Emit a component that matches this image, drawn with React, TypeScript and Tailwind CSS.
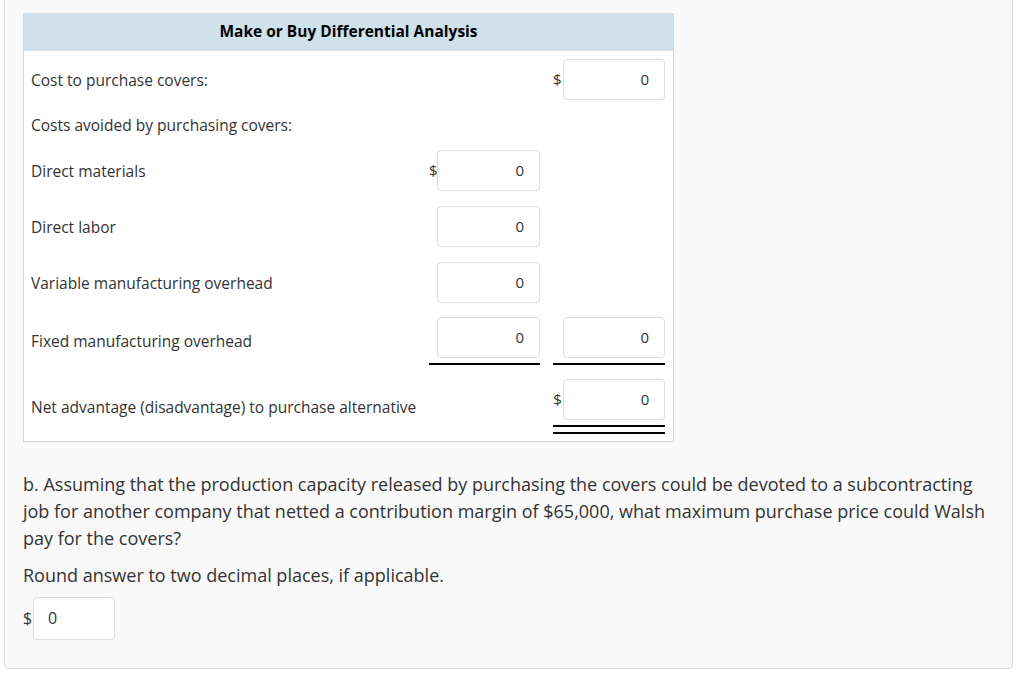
import React from "react";

const font = { fontFamily: '"Open Sans", "Noto Sans", sans-serif' };

function Box({ dollar, dw, w }: { dollar?: boolean; dw: string; w: string }) {
  return (
    <div className="flex items-center">
      <span className={`${dw} text-[15px] leading-none text-[#333] ${dollar ? "" : "invisible"}`}>$</span>
      <div
        className={`${w} h-[41px] rounded-[4px] border border-[#dcdcdc] bg-white flex items-center justify-end pr-[15px] text-[15px] text-[#333]`}
      >
        0
      </div>
    </div>
  );
}

export default function App() {
  const row = "grid grid-cols-[1fr_111px_112px] gap-x-[13px] pl-[7px] pr-2 items-center";
  const label = "text-[15.5px] leading-[20px] text-[#333] whitespace-nowrap";
  return (
    <div className="min-h-[674px] bg-white" style={font}>
      <div className="ml-[4px] w-[1009px] h-[669px] bg-[#f9f9f9] border-l border-r border-b border-[#d9d9d9] rounded-b-[5px] pl-[18px] pr-[18px] pt-[13px]">
        <div className="w-[651px] bg-white border border-[#d4d4d4] border-t-0">
          <div className="h-[38px] bg-[#cfe1eb] flex items-center justify-center text-[15.5px] font-bold text-black">
            Make or Buy Differential Analysis
          </div>
          {/* Row 1 */}
          <div className={`${row} pt-[8px] pb-[8px]`}>
            <div className={label}>Cost to purchase covers:</div>
            <div />
            <Box dollar dw="w-[10px]" w="w-[102px]" />
          </div>
          {/* Row 2 */}
          <div className={`${row} pt-[7px] pb-[7px]`}>
            <div className={label}>Costs avoided by purchasing covers:</div>
          </div>
          {/* Row 3 */}
          <div className={`${row} pt-[8px] pb-[7px]`}>
            <div className={label}>Direct materials</div>
            <Box dollar dw="w-[8px]" w="w-[103px]" />
            <div />
          </div>
          <div className={`${row} pt-[8px] pb-[7px]`}>
            <div className={label}>Direct labor</div>
            <Box dw="w-[8px]" w="w-[103px]" />
            <div />
          </div>
          <div className={`${row} pt-[8px] pb-[7px]`}>
            <div className={label}>Variable manufacturing overhead</div>
            <Box dw="w-[8px]" w="w-[103px]" />
            <div />
          </div>
          {/* Row 6 */}
          <div className={`${row} pt-[7px]`}>
            <div className={label}>Fixed manufacturing overhead</div>
            <div className="pb-[5px] border-b-2 border-black">
              <Box dw="w-[8px]" w="w-[103px]" />
            </div>
            <div className="pb-[5px] border-b-2 border-black">
              <Box dw="w-[10px]" w="w-[102px]" />
            </div>
          </div>
          {/* Row 7 */}
          <div className={`${row} pt-[14px] pb-[7px]`}>
            <div className={label}>Net advantage (disadvantage) to purchase alternative</div>
            <div />
            <div>
              <div className="pb-[5px] border-b-2 border-black">
                <Box dollar dw="w-[10px]" w="w-[102px]" />
              </div>
              <div className="mt-[5px] h-[2px] bg-black" />
            </div>
          </div>
        </div>

        <div className="pt-[29px] text-[18px] leading-[27px] text-[#333]">
          <p>
            b. Assuming that the production capacity released by purchasing the covers could be devoted to a
            subcontracting job for another company that netted a contribution margin of $65,000, what maximum
            purchase price could Walsh pay for the covers?
          </p>
          <p className="mt-[10px]">Round answer to two decimal places, if applicable.</p>
          <div className="mt-[8px] flex items-center">
            <span className="w-[10px] text-[16px]">$</span>
            <div className="w-[82px] h-[43px] rounded-[4px] border border-[#dcdcdc] bg-white flex items-center pl-[14px] text-[16px]">
              0
            </div>
          </div>
        </div>
      </div>
    </div>
  );
}
